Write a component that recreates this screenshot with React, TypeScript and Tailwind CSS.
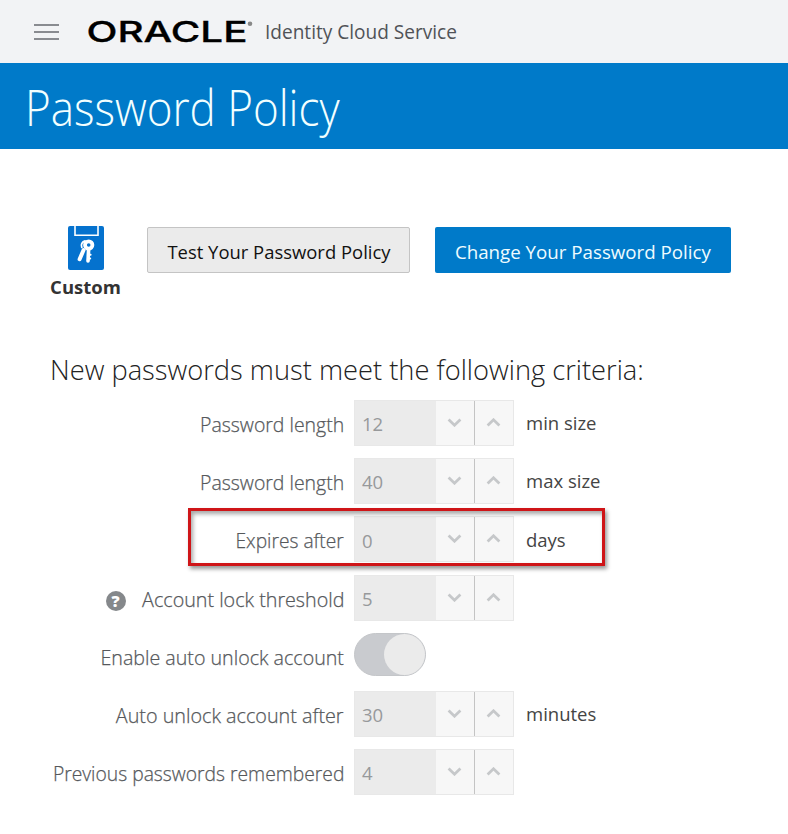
import React from "react";

type Criterion = {
  label: string;
  fit: string;
  value?: string;
  unit?: string;
  help?: boolean;
  toggle?: boolean;
  highlight?: boolean;
};

const criteria: Criterion[] = [
  { label: "Password length", fit: "scale-x-[0.973]", value: "12", unit: "min size" },
  { label: "Password length", fit: "scale-x-[0.973]", value: "40", unit: "max size" },
  { label: "Expires after", fit: "scale-x-[0.96]", value: "0", unit: "days", highlight: true },
  { label: "Account lock threshold", fit: "scale-x-[0.985]", value: "5", help: true },
  { label: "Enable auto unlock account", fit: "scale-x-[0.982]", toggle: true },
  { label: "Auto unlock account after", fit: "scale-x-[0.988]", value: "30", unit: "minutes" },
  { label: "Previous passwords remembered", fit: "scale-x-[0.964]", value: "4" },
];

function OracleLogo() {
  return (
    <svg className="ml-[28px] h-[44px] w-[168px] shrink-0" viewBox="0 0 168 44">
      <text
        x="-0.5"
        y="32"
        textLength="161"
        lengthAdjust="spacingAndGlyphs"
        fontFamily="Inter, sans-serif"
        fontWeight="500"
        fontSize="28.5"
        fill="#000"
        stroke="#000"
        strokeWidth="0.3"
      >
        ORACLE
      </text>
      <circle cx="163" cy="13.8" r="2.3" fill="#888" />
    </svg>
  );
}

function PolicyIcon() {
  return (
    <svg className="h-[44px] w-[36px]" viewBox="0 0 36 44">
      <rect width="36" height="44" rx="2" fill="#0572ce" />
      <path d="M7 0V9.2H30V0" fill="none" stroke="#fff" strokeWidth="1.6" />
      <g stroke="#fff" fill="none" strokeLinecap="round">
        <path d="M17 15a4.6 4.6 0 0 0-3.2 6.4" strokeWidth="1.8" />
        <path d="M15.6 24 11.6 33.2" strokeWidth="4" />
        <circle cx="20.7" cy="19" r="3.7" strokeWidth="3.8" />
        <path d="M20.6 24 20 35" strokeWidth="3.6" />
        <path d="M21 28.8h1.6M20.6 32.6h1.6" strokeWidth="2" />
      </g>
    </svg>
  );
}

function HelpIcon() {
  return (
    <span className="mr-[13px] mt-[3px] flex h-5 w-5 items-center justify-center rounded-full bg-[#85888b] text-[16px] font-extrabold leading-none text-white">
      ?
    </span>
  );
}

function Chevron({ up = false }: { up?: boolean }) {
  return (
    <svg className="h-[9px] w-[15px]" viewBox="0 0 15 9">
      <path d={up ? "M1.6 7.4 7.5 1.8 13.4 7.4" : "M1.6 1.6 7.5 7.2 13.4 1.6"} fill="none" stroke="#c6c8ca" strokeWidth="2.8" />
    </svg>
  );
}

function Stepper({ value }: { value: string }) {
  return (
    <div className="flex h-[46px] w-[160px] border border-[#e8e8e8]">
      <div className="flex w-[81px] items-center bg-[#ebebeb] pl-[7px] pt-[2px] text-[18.5px] text-[#97999b]">{value}</div>
      <div className="flex w-[38px] items-center justify-center bg-[#f7f7f7] pb-px pr-[2px]">
        <Chevron />
      </div>
      <div className="flex flex-1 items-center justify-center border-l border-[#c4c4c4] bg-[#f7f7f7] pb-px pr-[2px]">
        <Chevron up />
      </div>
    </div>
  );
}

function Toggle() {
  return (
    <div className="flex h-[43px] w-[72px] justify-end rounded-full border border-[#c4c6c9] bg-[#c9cbcf]">
      <div className="h-[41px] w-[41px] rounded-full bg-[#ebebeb]" />
    </div>
  );
}

function Row({ item }: { item: Criterion }) {
  return (
    <div className="relative flex h-[58.2px] items-start">
      <div className="flex h-[46px] w-[344px] items-center justify-end whitespace-nowrap pt-[4px] text-[20px] font-light text-[#55585b]">
        {item.help && <HelpIcon />}
        <span className={`origin-right [-webkit-text-stroke:0.25px_#55585b] ${item.fit}`}>{item.label}</span>
      </div>
      <div className="ml-[10px]">{item.toggle ? <Toggle /> : <Stepper value={item.value ?? ""} />}</div>
      {item.unit && <span className="ml-[12px] flex h-[46px] items-center text-[18.5px] text-[#444]">{item.unit}</span>}
      {item.highlight && (
        <div className="absolute left-[188px] top-[-8px] h-[58px] w-[417px] border-3 border-[#cf1518] shadow-[2px_3px_4px_rgba(0,0,0,0.4),inset_2px_3px_4px_rgba(0,0,0,0.35)]" />
      )}
    </div>
  );
}

export default function App() {
  return (
    <div className="h-[834px] w-[788px] overflow-hidden bg-white font-['Open_Sans','Noto_Sans',sans-serif]">
      <header className="flex h-[63px] items-center bg-[#f2f3f5] pl-[34px]">
        <div className="flex w-[25px] flex-col gap-[5px]">
          <span className="h-[2px] bg-[#898b90]" />
          <span className="h-[2px] bg-[#898b90]" />
          <span className="h-[2px] bg-[#898b90]" />
        </div>
        <OracleLogo />
        <span className="ml-[10px] origin-left scale-x-[0.977] whitespace-nowrap pt-px text-[19.5px] text-[#505257]">Identity Cloud Service</span>
      </header>
      <div className="flex h-[86px] items-center bg-[#007ac9] pl-[25px]">
        <h1 className="origin-left scale-x-[0.897] whitespace-nowrap pt-[3px] text-[49px] font-light text-[#f2ffff]">Password Policy</h1>
      </div>
      <main className="flex flex-col">
        <div className="flex h-[151px] items-start pt-[77px]">
          <div className="flex w-[121px] flex-col items-center pl-[50px]">
            <PolicyIcon />
            <span className="mt-[3px] text-[18.5px] font-bold leading-[28px] text-[#333]">Custom</span>
          </div>
          <button className="ml-[26px] mt-px flex h-[46px] w-[263px] items-center justify-center whitespace-nowrap rounded-[2px] border border-[#c4c4c4] bg-[#ebebeb] pt-[4px] text-[19px] text-[#111]">
            <span className="scale-x-[0.97]">Test Your Password Policy</span>
          </button>
          <button className="ml-[25px] mt-px flex h-[46px] w-[296px] items-center justify-center whitespace-nowrap rounded-[2px] bg-[#007ac9] pt-[4px] text-[19px] text-[#effcff]">
            <span className="scale-x-[0.985]">Change Your Password Policy</span>
          </button>
        </div>
        <h2 className="flex h-[100px] items-end whitespace-nowrap pb-[10px] pl-[50px] text-[28px] font-light text-[#222]">
          <span className="origin-left scale-x-[0.974]">New passwords must meet the following criteria:</span>
        </h2>
        <section>
          {criteria.map((item, i) => (
            <Row key={i} item={item} />
          ))}
        </section>
      </main>
    </div>
  );
}
